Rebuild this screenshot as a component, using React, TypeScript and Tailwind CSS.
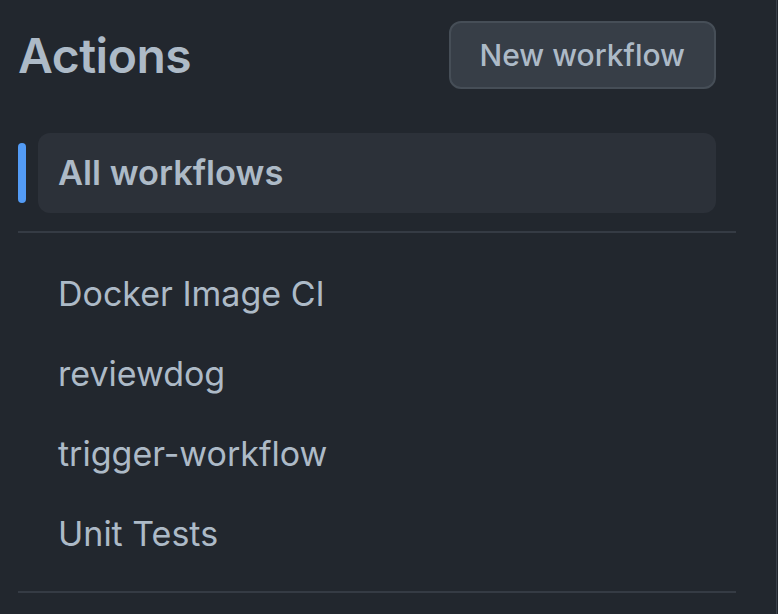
import React from 'react';

const workflows = ['Docker Image CI', 'reviewdog', 'trigger-workflow', 'Unit Tests'];

const App: React.FC = () => {
  return (
    <div
      className="flex w-[778px] h-[614px] overflow-hidden bg-[#22272e] text-[#adbac7]"
      style={{ fontFamily: 'Inter, "Noto Sans", sans-serif' }}
    >
      <div className="w-[777px] h-full border-r border-[#3a414a] pl-[18px]">
        <div className="w-[718px]">
          {/* Header */}
          <div className="flex items-center justify-between pt-[21px] pr-[20px]">
            <h1 className="text-[48px] font-semibold leading-none tracking-[-0.5px] mt-[2px]">Actions</h1>
            <button className="h-[68px] px-[29px] rounded-[12px] bg-[#373e47] border-2 border-[#464e57] text-[30px] font-medium">
              New workflow
            </button>
          </div>

          {/* Selected item */}
          <div className="flex items-center gap-[12px] mt-[44px]">
            <span className="w-[8px] h-[60px] rounded-full bg-[#539bf5]" />
            <div className="flex items-center w-[678px] h-[80px] rounded-[12px] bg-[#2c3139] pl-[20px] pb-[1px] text-[34.4px] font-semibold">
              All workflows
            </div>
          </div>

          <div className="h-[2px] mt-[18px] bg-[#353b44]" />

          {/* Workflow list */}
          <ul className="pt-[20px] pb-[18px]">
            {workflows.map((name) => (
              <li key={name} className="flex items-center h-[80px] ml-[20px] pl-[20px] text-[34px]">
                {name}
              </li>
            ))}
          </ul>

          <div className="h-[2px] bg-[#353b44]" />
        </div>
      </div>
    </div>
  );
};

export default App;
